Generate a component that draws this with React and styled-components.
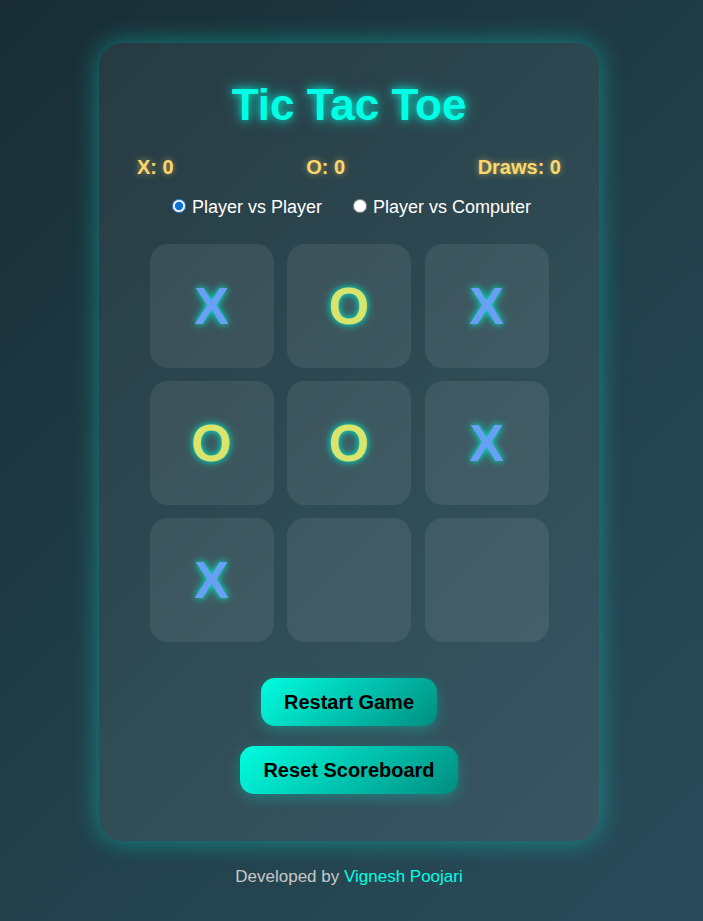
import React, { useState } from 'react';
import styled, { createGlobalStyle } from 'styled-components';

const GlobalStyle = createGlobalStyle`
    html, body {
        margin: 0;
        padding: 0;
    }
    body {
        min-height: 100vh;
        font-family: "Liberation Sans", Arial, sans-serif;
        background: linear-gradient(135deg, #192c34 0%, #21404a 55%, #2a4c5a 100%);
        background-attachment: fixed;
    }
`;

const Page = styled.div`
    min-height: 921px;
    display: flex;
    flex-direction: column;
    align-items: center;
    padding: 43px 5px 0 0;
    box-sizing: border-box;
`;

const Card = styled.div`
    width: 500px;
    height: 798px;
    box-sizing: border-box;
    padding: 37px 38px 0;
    border-radius: 24px;
    background: linear-gradient(135deg, rgba(255,255,255,0.055), rgba(255,255,255,0.075));
    box-shadow: 0 0 26px rgba(0, 230, 210, 0.45);
    display: flex;
    flex-direction: column;
    align-items: center;
`;

const Title = styled.h1`
    margin: 0;
    font-size: 44px;
    line-height: 50px;
    font-weight: bold;
    color: #00ffe4;
    text-shadow: 0 0 8px rgba(0, 255, 228, 0.8), 0 0 18px rgba(0, 255, 228, 0.45);
`;

const Scores = styled.div`
    align-self: stretch;
    display: flex;
    justify-content: space-between;
    margin-top: 26px;
    font-size: 20px;
    line-height: 22px;
    font-weight: bold;
    color: #fbd86c;
    text-shadow: 0 0 6px rgba(251, 216, 108, 0.6);
`;

const Modes = styled.div`
    display: flex;
    gap: 26px;
    margin-top: 18px;
    font-size: 18px;
    line-height: 22px;
    color: #ffffff;
`;

const ModeLabel = styled.label`
    display: flex;
    align-items: center;
    cursor: pointer;
`;

const Radio = styled.input`
    margin: 0 6px 3px 5px;
    width: 14px;
    height: 14px;
    accent-color: #0a6fd6;
`;

const Board = styled.div`
    display: grid;
    grid-template-columns: repeat(3, 124px);
    grid-auto-rows: 124px;
    gap: 13px 13.5px;
    margin-top: 26px;
`;

const Cell = styled.button`
    border: none;
    border-radius: 18px;
    background: rgba(255, 255, 255, 0.08);
    font-family: "Liberation Sans", Arial, sans-serif;
    font-size: 52px;
    font-weight: bold;
    color: ${p => (p.$mark === 'X' ? '#68a0f6' : '#d8e46c')};
    text-shadow: 0 0 6px rgba(0, 235, 200, 0.95), 0 0 12px rgba(0, 235, 200, 0.4);
    display: flex;
    align-items: center;
    justify-content: center;
    padding: 0;
    cursor: pointer;
`;

const Buttons = styled.div`
    display: flex;
    flex-direction: column;
    align-items: center;
    gap: 20px;
    margin-top: 36px;
`;

const ActionButton = styled.button`
    border: none;
    border-radius: 14px;
    padding: 13px 23px;
    font-family: "Liberation Sans", Arial, sans-serif;
    font-size: 20px;
    line-height: 22px;
    font-weight: bold;
    color: #000;
    background: linear-gradient(135deg, #00fde0, #008e80);
    box-shadow: 0 4px 14px rgba(0, 230, 210, 0.3);
    cursor: pointer;
`;

const Footer = styled.p`
    margin: 26px 0 0;
    font-size: 17px;
    line-height: 20px;
    color: #c8c8c8;
`;

const Link = styled.a`
    color: #00ffe4;
    text-decoration: none;
`;

const initialBoard = ['X', 'O', 'X', 'O', 'O', 'X', 'X', '', ''];

export default function App() {
    const [mode, setMode] = useState('pvp');
    const board = initialBoard;

    return (
        <>
            <GlobalStyle />
            <Page>
                <Card>
                    <Title>Tic Tac Toe</Title>
                    <Scores>
                        <span>X: 0</span>
                        <span>O: 0</span>
                        <span>Draws: 0</span>
                    </Scores>
                    <Modes>
                        <ModeLabel>
                            <Radio type="radio" name="mode" checked={mode === 'pvp'} onChange={() => setMode('pvp')} />
                            Player vs Player
                        </ModeLabel>
                        <ModeLabel>
                            <Radio type="radio" name="mode" checked={mode === 'pvc'} onChange={() => setMode('pvc')} />
                            Player vs Computer
                        </ModeLabel>
                    </Modes>
                    <Board>
                        {board.map((m, i) => (
                            <Cell key={i} $mark={m}>{m}</Cell>
                        ))}
                    </Board>
                    <Buttons>
                        <ActionButton>Restart Game</ActionButton>
                        <ActionButton>Reset Scoreboard</ActionButton>
                    </Buttons>
                </Card>
                <Footer>
                    Developed by <Link href="#">Vignesh Poojari</Link>
                </Footer>
            </Page>
        </>
    );
}
